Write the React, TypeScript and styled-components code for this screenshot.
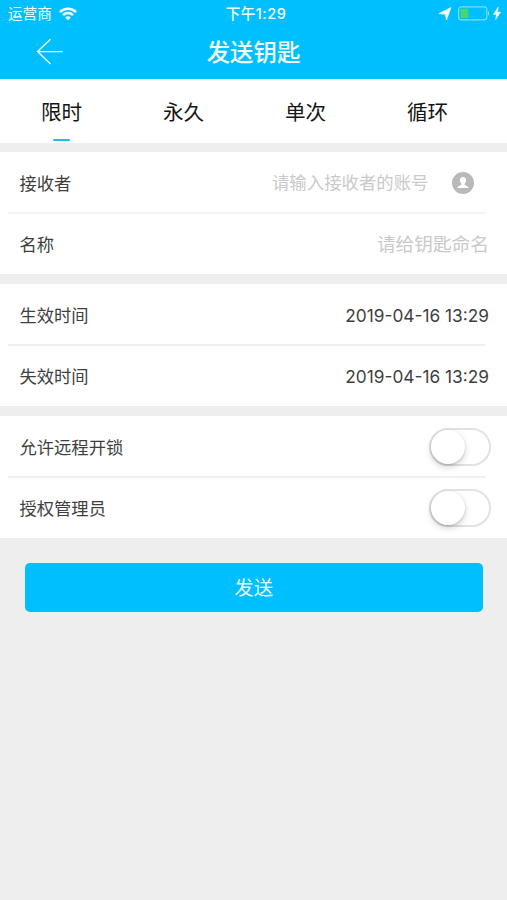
import React from "react";
import styled, { createGlobalStyle } from "styled-components";

const Global = createGlobalStyle`
  * { box-sizing: border-box; }
  body {
    margin: 0;
    background: #eeeeee;
    font-family: Inter, "Noto Sans CJK SC", sans-serif;
    color: #3f3f3f;
  }
`;

const Screen = styled.div`
  display: flex;
  flex-direction: column;
  width: 507px;
  height: 900px;
  overflow: hidden;
  background: #eeeeee;
`;

const Header = styled.header`
  height: 79px;
  flex: none;
  background: #00bfff;
  color: #f2fdff;
`;

const StatusBar = styled.div`
  display: grid;
  grid-template-columns: 1fr auto 1fr;
  align-items: center;
  height: 28px;
  padding: 1px 4px 0 8px;
  font-size: 14.6px;
  line-height: 27px;
`;

const Carrier = styled.div`
  display: flex;
  align-items: center;
  gap: 7px;

  svg {
    margin-bottom: 2px;
  }
`;

const Clock = styled.div`
  font-weight: 500;
  letter-spacing: 0.45px;
  margin-left: 1px;
`;

const Indicators = styled.div`
  display: flex;
  align-items: center;
  justify-content: flex-end;
  padding-bottom: 3px;
`;

const NavBar = styled.div`
  display: grid;
  grid-template-columns: 100px 1fr 100px;
  align-items: center;
  height: 50px;
`;

const BackButton = styled.button`
  display: flex;
  width: 27px;
  height: 27px;
  margin: 0 0 3px 36px;
  padding: 0;
  border: 0;
  background: none;
  color: inherit;
`;

const Title = styled.h1`
  margin: 0;
  text-align: center;
  font-size: 23.4px;
  line-height: 50px;
  font-weight: 500;
`;

const Tabs = styled.nav`
  display: grid;
  grid-template-columns: repeat(4, 122px);
  flex: none;
  height: 64px;
  padding-left: 0.5px;
  background: #fff;
`;

const Tab = styled.button<{ $active?: boolean }>`
  display: flex;
  flex-direction: column;
  align-items: center;
  justify-content: flex-end;
  padding: 0 0 2px;
  border: 0;
  background: none;
  font-family: inherit;
  font-size: 20.6px;
  line-height: 60px;
  color: #151515;

  &::after {
    content: "";
    width: 17px;
    height: 2px;
    margin-top: -4px;
    flex: none;
    border-radius: 1px;
    background: ${(p) => (p.$active ? "#1fbdec" : "transparent")};
  }
`;

const TabLabel = styled.span`
  height: 60px;
`;

const Group = styled.section<{ $gap: number }>`
  flex: none;
  height: 122px;
  margin-top: ${(p) => p.$gap}px;
  background: #fff;
`;

const Row = styled.div<{ $end?: number }>`
  display: flex;
  align-items: center;
  justify-content: space-between;
  height: 60px;
  padding: 0 ${(p) => p.$end ?? 18}px 0 19.5px;
  font-size: 17.3px;
  line-height: 26px;

  &:first-child {
    padding-top: 2px;
  }
`;

const Label = styled.span`
  margin-top: 2px;
`;

const Divider = styled.hr<{ $thin?: boolean }>`
  height: 2px;
  margin: 0 22px 0 8px;
  border: 0;
  background: ${(p) => (p.$thin ? "#f3f3f3" : "#efefef")};
`;

const Field = styled.div`
  display: flex;
  align-items: center;
  gap: 23.5px;
`;

const Placeholder = styled.span<{ $size: number; $drop?: number }>`
  margin-top: ${(p) => p.$drop ?? 0}px;
  font-size: ${(p) => p.$size}px;
  color: #c9c9cc;
`;

const DateValue = styled.span`
  margin-top: 2px;
  font-size: 17.3px;
  white-space: nowrap;
`;

const Toggle = styled.button`
  width: 62px;
  height: 38px;
  padding: 0;
  border: 2px solid #e2e2e2;
  border-radius: 19px;
  background: #fff;
`;

const Knob = styled.span`
  display: block;
  width: 34px;
  height: 34px;
  border-radius: 50%;
  background: #fff;
  box-shadow: 0 3px 7px rgba(0, 0, 0, 0.18), 0 1px 2px rgba(0, 0, 0, 0.14);
`;

const SendButton = styled.button`
  flex: none;
  height: 49px;
  margin: 25px 24.5px 0 25px;
  padding: 2px 0 0;
  border: 0;
  border-radius: 5px;
  background: #00bfff;
  color: #eafaff;
  font-family: inherit;
  font-size: 19.4px;
  line-height: 47px;
`;

const WifiIcon = () => (
  <svg width="18" height="14" viewBox="0 0 18 14" fill="none" stroke="#f4feff" strokeWidth="2.5">
    <path d="M1 5.2C5.5.7 12.5.7 17 5.2" />
    <path d="M4 8.2c2.8-2.8 7.2-2.8 10 0" />
    <path d="M9 13.2 6.2 10.4c1.5-1.5 4.1-1.5 5.6 0Z" fill="#f4feff" stroke="none" />
  </svg>
);

const BackIcon = () => (
  <svg width="27" height="27" viewBox="0 0 27 27" fill="none" stroke="currentColor" strokeWidth="1.4">
    <path d="M14.5 1.2 1.5 13.6l13 12.4M1.5 13.6h25" />
  </svg>
);

const StatusIcons = () => (
  <svg width="65" height="18" viewBox="0 0 65 18">
    <path d="M.8 9.6 13 3.5 8.5 16 7.3 10.3Z" fill="#f4feff" stroke="#f4feff" strokeWidth="0.6" />
    <rect x="20.6" y="2.8" width="28.2" height="13" rx="2.8" fill="none" stroke="#7edcff" strokeWidth="1.2" />
    <rect x="22.5" y="4.7" width="7.8" height="9.2" rx="1" fill="#42d86b" />
    <path d="M50 7c1.7.7 1.7 4 0 4.7Z" fill="#7edcff" />
    <path d="M60 3.3 55.3 10.4h3l-.8 5.3 5.2-7.6h-3.3l1-4.8Z" fill="#f4feff" stroke="#f4feff" strokeWidth="0.4" />
  </svg>
);

const ContactIcon = () => (
  <svg width="22" height="22" viewBox="0 0 22 22">
    <circle cx="11" cy="11" r="11" fill="#b9b9b9" />
    <path
      d="M11 5c-2 0-3.200 1.300-3.100 3.200.1 1.700.6 2.700 1.500 3.500v1.100c-.5.9-3.600 1-4.100 3.200h11.400c-.5-2.200-3.600-2.300-4.100-3.200v-1.100c.9-.8 1.400-1.800 1.500-3.500C14.200 6.300 13 5 11 5Z"
      fill="#fff"
    />
  </svg>
);

const tabs = ["限时", "永久", "单次", "循环"];

const ToggleRow = ({ label }: { label: string }) => (
  <Row $end={16}>
    <Label>{label}</Label>
    <Toggle role="switch" aria-checked={false} aria-label={label}>
      <Knob />
    </Toggle>
  </Row>
);

export default function App() {
  return (
    <>
      <Global />
      <Screen>
        <Header>
          <StatusBar>
            <Carrier>
              <span>运营商</span>
              <WifiIcon />
            </Carrier>
            <Clock>下午1:29</Clock>
            <Indicators>
              <StatusIcons />
            </Indicators>
          </StatusBar>
          <NavBar>
            <BackButton aria-label="返回">
              <BackIcon />
            </BackButton>
            <Title>发送钥匙</Title>
          </NavBar>
        </Header>
        <Tabs>
          {tabs.map((tab, i) => (
            <Tab key={tab} $active={i === 0}>
              <TabLabel>{tab}</TabLabel>
            </Tab>
          ))}
        </Tabs>
        <Group $gap={9}>
          <Row $end={33}>
            <Label>接收者</Label>
            <Field>
              <Placeholder $size={17.4}>请输入接收者的账号</Placeholder>
              <ContactIcon />
            </Field>
          </Row>
          <Divider $thin />
          <Row>
            <Label>名称</Label>
            <Placeholder $size={18.7} $drop={2}>
              请给钥匙命名
            </Placeholder>
          </Row>
        </Group>
        <Group $gap={10}>
          <Row>
            <Label>生效时间</Label>
            <DateValue>2019-04-16 13:29</DateValue>
          </Row>
          <Divider />
          <Row>
            <Label>失效时间</Label>
            <DateValue>2019-04-16 13:29</DateValue>
          </Row>
        </Group>
        <Group $gap={10}>
          <ToggleRow label="允许远程开锁" />
          <Divider />
          <ToggleRow label="授权管理员" />
        </Group>
        <SendButton>发送</SendButton>
      </Screen>
    </>
  );
}
